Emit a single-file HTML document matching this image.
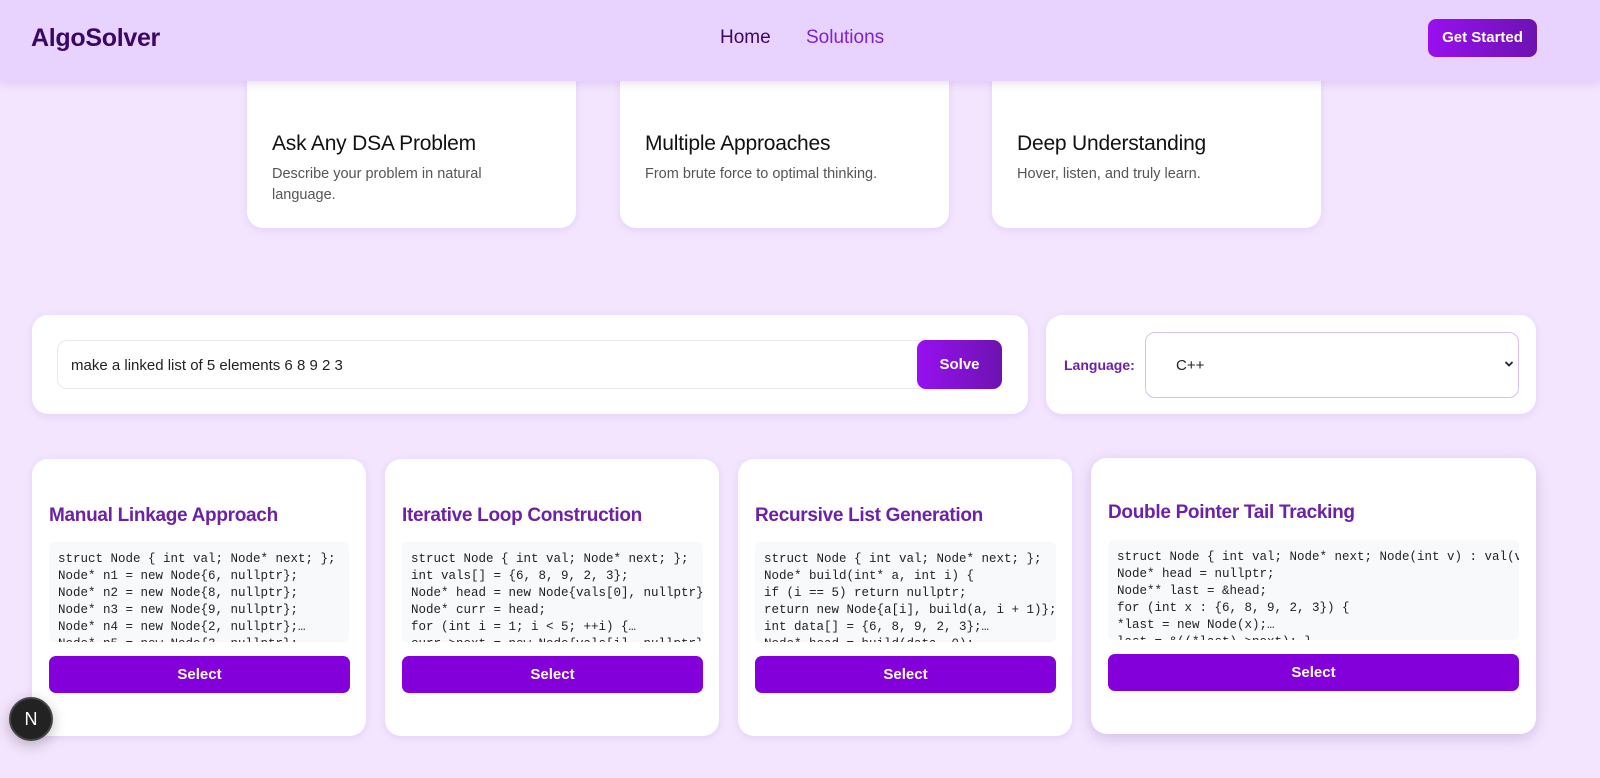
<!DOCTYPE html>
<html><head><meta charset="utf-8"><style>
*{box-sizing:border-box;margin:0;padding:0}
html,body{width:1600px;height:778px;overflow:hidden}
body{background:#f3e5fe;font-family:"Liberation Sans",sans-serif;position:relative}
.abs{position:absolute}
.card{position:absolute;background:#fff;border-radius:16px;box-shadow:0 2px 8px rgba(120,60,180,.12)}
.feat h3{position:absolute;left:25px;top:72px;font-size:21px;font-weight:normal;color:#111;letter-spacing:-.2px}
.feat p{position:absolute;left:25px;top:104px;font-size:14.5px;color:#555;line-height:21px;width:240px}
header{position:absolute;left:0;top:0;width:1600px;height:81px;background:#e8d3fe;box-shadow:0 3px 8px rgba(120,60,180,.15);z-index:5}
.appr h2{position:absolute;left:17px;top:46px;font-size:19px;font-weight:bold;color:#6b21a8;letter-spacing:-.3px;white-space:nowrap}
.code{position:absolute;left:17px;top:83px;height:100px;background:#f8f9fb;border-radius:6px;overflow:hidden;padding:9px 9px 0;font-family:"Liberation Mono",monospace;font-size:12.5px;line-height:17px;color:#222;white-space:pre}
.sel{position:absolute;left:17px;top:197px;height:37px;background:#8400db;border-radius:7px;color:#fff;font-weight:bold;font-size:15px;text-align:center;line-height:37px}
</style></head><body>
<header>
<div class="abs" style="left:31px;top:24px;font-size:25px;font-weight:bold;color:#3b0764;letter-spacing:-.3px">AlgoSolver</div>
<div class="abs" style="left:720px;top:27px;font-size:19px;color:#3b0764">Home</div>
<div class="abs" style="left:806px;top:27px;font-size:19px;color:#7e22ce">Solutions</div>
<div class="abs" style="left:1428px;top:19px;width:109px;height:38px;border-radius:8px;background:linear-gradient(90deg,#9810f0,#6d13b0);color:#fff;font-weight:bold;font-size:15px;text-align:center;line-height:38px">Get Started</div>
</header>

<div class="card feat" style="left:247px;top:60px;width:329px;height:168px"><h3>Ask Any DSA Problem</h3><p>Describe your problem in natural language.</p></div>
<div class="card feat" style="left:620px;top:60px;width:329px;height:168px"><h3>Multiple Approaches</h3><p>From brute force to optimal thinking.</p></div>
<div class="card feat" style="left:992px;top:60px;width:329px;height:168px"><h3>Deep Understanding</h3><p>Hover, listen, and truly learn.</p></div>

<div class="card" style="left:32px;top:315px;width:996px;height:99px">
<div class="abs" style="left:25px;top:25px;width:945px;height:49px;border:1px solid #e8e8ee;border-radius:10px"></div>
<div class="abs" style="left:39px;top:42px;font-size:15px;color:#222">make a linked list of 5 elements 6 8 9 2 3</div>
<div class="abs" style="left:885px;top:25px;width:85px;height:49px;border-radius:9px;background:linear-gradient(90deg,#9810f0,#6d13b0);color:#fff;font-weight:bold;font-size:15px;text-align:center;line-height:49px">Solve</div>
</div>
<div class="card" style="left:1046px;top:315px;width:490px;height:99px">
<div class="abs" style="left:18px;top:42px;font-size:14px;font-weight:bold;color:#6b21a8">Language:</div>
<div class="abs" style="left:99px;top:17px;width:374px;height:66px;border:1px solid #d8c0f0;border-radius:10px"></div>
<div class="abs" style="left:130px;top:42px;font-size:15px;color:#222">C++</div>
<svg class="abs" style="left:458px;top:45px" width="10" height="8" viewBox="0 0 10 8"><path d="M1.5 2l3.5 3.5L8.5 2" stroke="#222" stroke-width="1.8" fill="none"/></svg>
</div>

<div class="card appr" style="left:32px;top:459px;width:334px;height:277px"><h2>Manual Linkage Approach</h2>
<div class="code" style="width:300px">struct Node { int val; Node* next; };
Node* n1 = new Node{6, nullptr};
Node* n2 = new Node{8, nullptr};
Node* n3 = new Node{9, nullptr};
Node* n4 = new Node{2, nullptr};…
Node* n5 = new Node{3, nullptr};</div>
<div class="sel" style="width:301px">Select</div></div>

<div class="card appr" style="left:385px;top:459px;width:334px;height:277px"><h2>Iterative Loop Construction</h2>
<div class="code" style="width:301px">struct Node { int val; Node* next; };
int vals[] = {6, 8, 9, 2, 3};
Node* head = new Node{vals[0], nullptr};
Node* curr = head;
for (int i = 1; i &lt; 5; ++i) {…
curr->next = new Node{vals[i], nullptr};</div>
<div class="sel" style="width:301px">Select</div></div>

<div class="card appr" style="left:738px;top:459px;width:334px;height:277px"><h2>Recursive List Generation</h2>
<div class="code" style="width:301px">struct Node { int val; Node* next; };
Node* build(int* a, int i) {
if (i == 5) return nullptr;
return new Node{a[i], build(a, i + 1)}; }
int data[] = {6, 8, 9, 2, 3};…
Node* head = build(data, 0);</div>
<div class="sel" style="width:301px">Select</div></div>

<div class="card appr" style="left:1091px;top:458px;width:445px;height:276px;box-shadow:0 4px 14px rgba(80,40,140,.2)"><h2 style="top:44px">Double Pointer Tail Tracking</h2>
<div class="code" style="width:411px;top:82px">struct Node { int val; Node* next; Node(int v) : val(v), next(nullptr) {} };
Node* head = nullptr;
Node** last = &amp;head;
for (int x : {6, 8, 9, 2, 3}) {
*last = new Node(x);…
last = &amp;((*last)->next); }</div>
<div class="sel" style="width:411px;top:196px">Select</div></div>

<div class="abs" style="left:9px;top:697px;width:44px;height:44px;border-radius:50%;background:#222;border:2px solid #444;color:#fff;font-size:18px;text-align:center;line-height:40px;box-shadow:0 4px 14px rgba(0,0,0,.25)">N</div>
</body></html>
